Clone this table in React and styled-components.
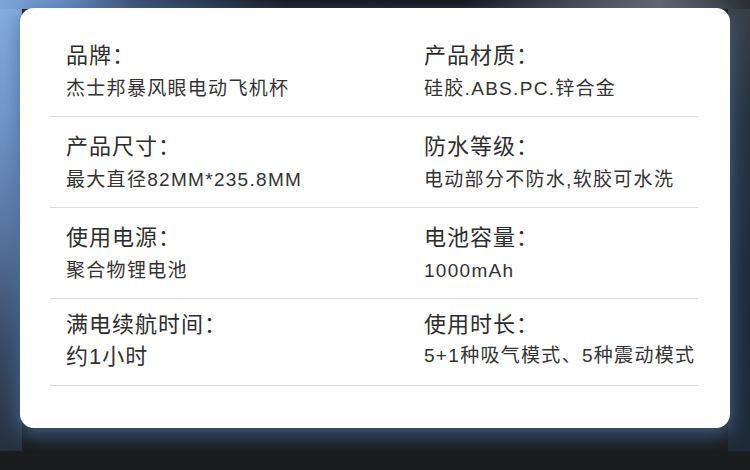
import React from "react";
import styled, { createGlobalStyle } from "styled-components";

const GlobalStyle = createGlobalStyle`
  html, body {
    margin: 0;
    padding: 0;
    background: #1b1c1e;
  }
  body {
    font-family: "Liberation Sans", "Noto Sans CJK SC", sans-serif;
  }
`;

const specs = [
  [
    { label: "品牌：", value: "杰士邦暴风眼电动飞机杯" },
    { label: "产品材质：", value: "硅胶.ABS.PC.锌合金" },
  ],
  [
    { label: "产品尺寸：", value: "最大直径82MM*235.8MM" },
    { label: "防水等级：", value: "电动部分不防水,软胶可水洗" },
  ],
  [
    { label: "使用电源：", value: "聚合物锂电池" },
    { label: "电池容量：", value: "1000mAh" },
  ],
  [
    { label: "满电续航时间：", value: "约1小时", big: true },
    { label: "使用时长：", value: "5+1种吸气模式、5种震动模式" },
  ],
];

const App = () => {
  return (
    <>
      <GlobalStyle />
      <Stage>
        <Card>
          <SpecList>
            {specs.map((row, i) => (
              <Row key={i} $last={i === specs.length - 1}>
                {row.map((item) => (
                  <Cell key={item.label} $last={i === specs.length - 1}>
                    <Label>{item.label}</Label>
                    <Value $big={item.big}>{item.value}</Value>
                  </Cell>
                ))}
              </Row>
            ))}
          </SpecList>
        </Card>
        <Floor />
      </Stage>
    </>
  );
};

const Stage = styled.div`
  width: 750px;
  height: 470px;
  overflow: hidden;
  display: flex;
  flex-direction: column;
  background:
    linear-gradient(to right, #7fa6d8 0%, #6a8fc6 8%, #3d5072 18%, #15181c 38%, #121418 62%, #4f535a 80%, #62666c 88%, #2a2e34 100%) left top / 100% 9px no-repeat,
    linear-gradient(to bottom, #86aee2 0%, #7398cb 25%, #5a77a3 50%, #3b4c68 75%, #26303f 100%) left top / 22px 451px no-repeat,
    linear-gradient(to bottom, #3a4048 0%, #27333f 25%, #1e2b3a 60%, #1f2a37 100%) right top / 22px 451px no-repeat,
    #1b1c1e;
`;

const Card = styled.div`
  margin: 8px 0 0 20px;
  width: 710px;
  height: 420px;
  box-sizing: border-box;
  padding: 18px 32px 0 30px;
  background: #fff;
  border-radius: 14px;
  box-shadow: 0 6px 18px 2px rgba(72, 108, 152, 0.75);
  position: relative;
  z-index: 1;
`;

const Floor = styled.div`
  margin-top: auto;
  height: 19px;
  background: #1b1c1e;
  position: relative;
  z-index: 2;
`;

const SpecList = styled.div`
  display: flex;
  flex-direction: column;
`;

const Row = styled.div`
  display: grid;
  grid-template-columns: 358px 1fr;
  padding: ${(p) => (p.$last ? "11px 0 13px 16px" : "15px 0 13px 16px")};
  border-bottom: 1px solid #dcdcdc;
`;

const Cell = styled.div`
  display: flex;
  flex-direction: column;
  gap: ${(p) => (p.$last ? "2px" : "4px")};
  color: #2e2e2e;
`;

const Label = styled.div`
  font-size: 22px;
  line-height: 30px;
  letter-spacing: 1px;
  white-space: nowrap;
`;

const Value = styled.div`
  font-size: ${(p) => (p.$big ? "22px" : "19px")};
  line-height: ${(p) => (p.$big ? "30px" : "28px")};
  letter-spacing: ${(p) => (p.$big ? "1px" : "1.3px")};
  color: #333;
  white-space: nowrap;
`;

export default App;
